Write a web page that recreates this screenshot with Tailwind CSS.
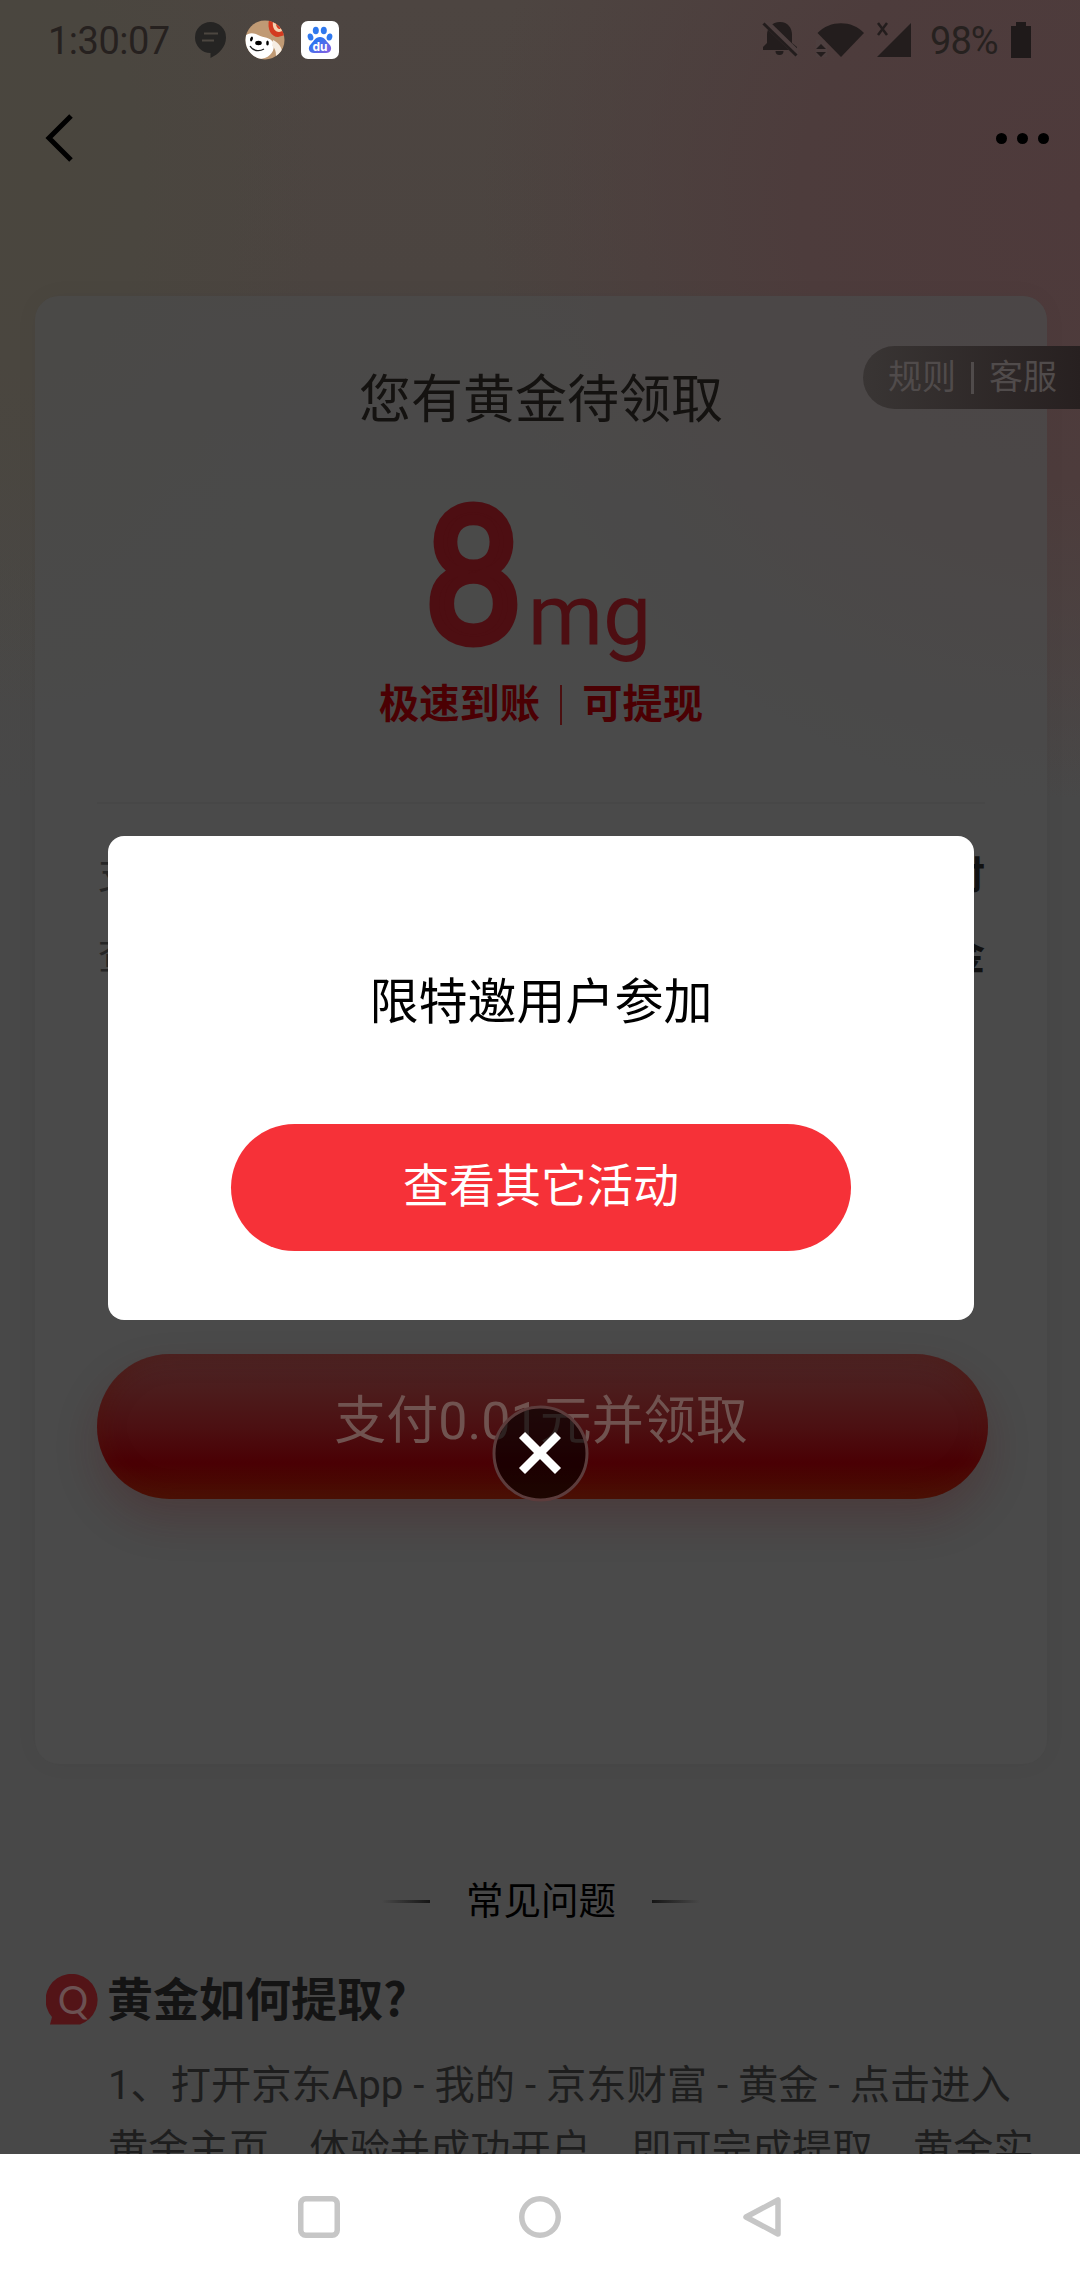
<!DOCTYPE html>
<html lang="zh-CN">
<head>
<meta charset="utf-8">
<title>领取黄金</title>
<script src="https://cdn.jsdelivr.net/npm/@tailwindcss/browser@4"></script>
</head>
<body class="font-['Roboto','Noto_Sans_CJK_SC',sans-serif]">
<div class="relative flex h-[2280px] w-[1080px] flex-col overflow-hidden bg-white">
  <div class="relative flex h-[2154px] shrink-0 flex-col overflow-hidden bg-[#484848] bg-[radial-gradient(circle_at_1080px_200px,#4e3a3b_0,#4d3c3c_280px,#4a434200_600px),radial-gradient(ellipse_at_40px_180px,#4a463e_0,#4a463f_100px,#4b464000_280px),linear-gradient(to_bottom,#4d4541_0,#4b4440_280px,#494745_500px,#484848_800px)]">
    <header class="flex h-[80px] shrink-0 items-center pr-[47px] pl-[48px] text-[#26211f]">
      <span class="w-[122px] pt-[2px] text-[38px] leading-none tracking-[-0.5px]">1:30:07</span>
      <svg class="ml-[25px] h-[36px] w-[31px]" viewBox="0 0 31 36"><path fill="#252423" d="M15.500 0a15.500 15.500 0 1 0 0 31v5C24 32 31 25 31 15.500A15.500 15.500 0 0 0 15.500 0z"/><path stroke="#4c4640" stroke-width="2" d="M9 11.500h14M7 18.500h12"/></svg>
      <svg class="ml-[19px] h-[40px] w-[40px]" viewBox="0 0 40 40"><defs><clipPath id="dog"><circle cx="20" cy="20" r="19.500"/></clipPath></defs><g clip-path="url(#dog)"><path fill="#c09a74" d="M0 0h40v40H0z"/><path fill="#fff" d="M-1 17c4-4 8-5 14-2 6 3 12 2 15 7 3 7-2 17-15 17C4 39-3 30-1 17z"/><path fill="#f6ede2" d="M28 20c5 2 10 8 9 14l-6 2c0-5-1-8-4-10z"/><path fill="#d33a20" d="M24 0c-2 9 2 17 9 17l7-2V0z"/><path fill="#f3d2b0" d="M28 1c-1 7 2 11 6 11 3 0 5-3 6-5l-3-7z"/><path fill="#d33a20" d="M31 3c0 4 2 6 4 6l3-4-3-4z"/><ellipse cx="6.500" cy="19" rx="1.300" ry="2.500" transform="rotate(20 6.500 19)"/><ellipse cx="22.500" cy="23" rx="1.300" ry="2.500"/><ellipse cx="13.500" cy="23" rx="3.300" ry="2.200"/><path fill="none" stroke="#222" stroke-width="1.300" d="M5 26c3 5 9 6 14 3"/></g></svg>
      <svg class="ml-[16px] h-[38px] w-[38px]" viewBox="0 0 38 38"><defs><linearGradient id="paw" x1="0" x2="1" y1="0" y2="1"><stop offset=".3" stop-color="#2f74f0"/><stop offset="1" stop-color="#8a5fe0"/></linearGradient></defs><rect width="38" height="38" rx="7" fill="#fff"/><g fill="#2f78ee"><ellipse cx="9.500" cy="16" rx="2.800" ry="3.600" transform="rotate(-15 9.500 16)"/><ellipse cx="14.800" cy="9.500" rx="3" ry="3.800"/><ellipse cx="22.800" cy="9.500" rx="3" ry="3.800"/><ellipse cx="28.500" cy="16" rx="2.800" ry="3.600" transform="rotate(15 28.500 16)"/></g><path fill="url(#paw)" d="M19 16c5 0 6 4 9 7 4 4 2 9-3 9H13c-5 0-7-5-3-9 3-3 4-7 9-7z"/><text x="19" y="30" fill="#fff" font-family="Inter" font-size="12" font-weight="700" text-anchor="middle">du</text></svg>
      <span class="flex-1"></span>
      <svg class="h-[36px] w-[36px]" viewBox="0 0 36 36"><g fill="#231d1d"><path d="M18 0c8 0 12 6 12 13v8l5 4v3H1v-3l4-4v-8C5 6 10 0 18 0z"/><path d="M13.500 29h8a4 4 0 0 1-8 0z"/></g><path stroke="#4d3f3f" stroke-width="7" d="M3 0l34 33"/><path stroke="#231d1d" stroke-width="3" d="M1.500 1.500l33 32"/></svg>
      <svg class="ml-[18px] h-[36px] w-[48px]" viewBox="0 0 48 36"><path fill="#231d1d" d="M25 35L1.500 11C14-2 36-2 48 11z"/><path fill="#4d3f3f" d="M0 18h8l3 4v13H0z"/><path fill="#231d1d" d="M0 27l5-5 5 5zM0 30h10l-5 5z"/></svg>
      <svg class="ml-[12px] h-[36px] w-[36px]" viewBox="0 0 36 36"><path fill="#231d1d" d="M35 1v34H1z"/><path stroke="#231d1d" stroke-width="2.500" d="M2 1l9 12M11 1L2 13"/></svg>
      <span class="ml-[18px] w-[72px] pt-[2px] text-[38px] leading-none tracking-tight">98%</span>
      <svg class="mr-[2px] ml-[9px] h-[36px] w-[20px]" viewBox="0 0 20 36"><path fill="#1f1a1a" d="M5 0h10v4h5v32H0V4h5z"/></svg>
    </header>
    <nav class="flex h-[116px] shrink-0 items-center justify-between pr-[31px] pl-[45px]">
      <svg class="h-[48px] w-[28px]" viewBox="0 0 28 48"><path fill="none" stroke="#000" stroke-width="5" d="M26 2L4 24l22 22"/></svg>
      <div class="flex gap-[10px]"><i class="size-[11px] rounded-full bg-black"></i><i class="size-[11px] rounded-full bg-black"></i><i class="size-[11px] rounded-full bg-black"></i></div>
    </nav>
    <main class="mt-[100px] mr-[33px] ml-[35px] flex h-[1468px] shrink-0 flex-col items-center rounded-[24px] bg-[#4b4b4b]/75 px-[62px] shadow-[0_0_24px_#0000000a]">
      <h1 class="mt-[69px] text-[52px] leading-[72px] text-[#141210]">您有黄金待领取</h1>
      <div class="mt-[49px] flex h-[180px] items-end justify-center gap-[5px] text-[#4d0e12]">
        <span class="mb-[11px] w-[92px] text-center font-['Lato'] text-[184px] leading-[170px] font-normal [-webkit-text-stroke:11px_#4d0e12]"><span class="-ml-[11px] inline-block origin-center scale-x-[0.88]">8</span></span>
        <span class="mb-[7px] text-[86px] leading-[88px]">mg</span>
      </div>
      <div class="mt-[10px] flex items-center gap-[20px] text-[40.250px] leading-[58px] font-bold text-[#4b0003]"><span>极速到账</span><i class="h-[40px] w-[2px] bg-[#4b0f10]"></i><span>可提现</span></div>
      <div class="mt-[68px] h-[2px] w-full bg-[#474747]"></div>
      <div class="mt-[43px] flex w-full justify-between pl-[1px] text-[38px] leading-[56px]"><span class="text-[#262626]">支付方式</span><b class="text-[#111]">支付</b></div>
      <div class="mt-[25px] flex w-full justify-between pl-[1px] text-[38px] leading-[56px]"><span class="text-[#262626]">查看权益</span><b class="text-[#111]">黄金</b></div>
      <button class="mt-[370px] ml-[2px] flex h-[145px] w-[891px] shrink-0 justify-center rounded-full bg-[linear-gradient(#4b2526,#4c1c1c_25%,#4c1012_50%,#4a0004_75%,#491003)] pt-[32px] pr-[2px] text-[52px] leading-[72px] text-[#705350] shadow-[0_20px_40px_#4c101440,inset_0_0_24px_#50140a80]">支付0.01元并领取</button>
    </main>
    <section class="flex shrink-0 flex-col">
      <div class="mt-[110px] flex items-center justify-center gap-[36px] pl-[2px] text-[37.500px] leading-[54px] text-black"><i class="h-[3px] w-[48px] bg-linear-to-l from-[#161616] to-transparent"></i><span>常见问题</span><i class="h-[3px] w-[48px] bg-linear-to-r from-[#161616] to-transparent"></i></div>
      <div class="mt-[43px] flex items-center pl-[46px]">
        <svg class="h-[52px] w-[52px]" viewBox="0 0 52 52"><path fill="#531417" d="M4 50.500l2-7.500A26 26 0 1 1 34 50.500z"/><text x="27" y="40" fill="#6b5152" font-family="Lato" font-size="38" text-anchor="middle">Q</text></svg>
        <h2 class="-mt-[8px] ml-[9px] font-['Noto_Sans_CJK_SC'] text-[46px] leading-[66px] font-bold text-[#141414]">黄金如何提取?</h2>
      </div>
      <div class="pt-[25px] pl-[108px] text-[40.250px] leading-[64px] whitespace-nowrap text-[#1e1e1e]"><p>1、打开京东App - 我的 - 京东财富 - 黄金 - 点击进入</p><p>黄金主页，体验并成功开户，即可完成提取，黄金实</p></div>
    </section>
    <div class="absolute top-[346px] right-0 flex h-[63px] items-center gap-[15px] rounded-l-full bg-linear-to-r from-[#393534] to-[#272020] pr-[23px] pl-[25px] text-[34px] text-[#504b4b]"><span>规则</span><i class="h-[32px] w-[3px] bg-[#504b4b]"></i><span>客服</span></div>
    <section class="absolute top-[836px] left-[108px] flex h-[484px] w-[866px] flex-col items-center rounded-[16px] bg-white">
      <p class="mt-[132px] text-[49px] leading-[70px] text-black">限特邀用户参加</p>
      <button class="mt-[86px] h-[127px] w-[620px] rounded-full bg-[#f63138] pb-[3px] text-[46px] text-white">查看其它活动</button>
    </section>
    <svg class="absolute top-[1405px] left-[492px] size-[97px]" viewBox="0 0 97 97"><circle cx="48.500" cy="48.500" r="46.500" fill="#000" fill-opacity=".6" stroke="#5c3c3c" stroke-width="3"/><path stroke="#fff" stroke-width="8.500" d="M30 30l36 36M66 30L30 66"/></svg>
  </div>
  <footer class="flex h-[126px] items-center justify-center pl-[1px]">
    <svg class="size-[42px]" viewBox="0 0 42 42"><rect x="2.750" y="2.750" width="36.500" height="36.500" rx="5" fill="none" stroke="#c6c6c6" stroke-width="5.500"/></svg>
    <svg class="ml-[179px] size-[42px]" viewBox="0 0 42 42"><circle cx="21" cy="21" r="18.250" fill="none" stroke="#c6c6c6" stroke-width="5.500"/></svg>
    <svg class="ml-[180px] size-[42px]" viewBox="0 0 42 42"><path d="M37 4v34L5 21z" fill="none" stroke="#c6c6c6" stroke-width="5.500" stroke-linejoin="round"/></svg>
  </footer>
</div>
</body>
</html>
